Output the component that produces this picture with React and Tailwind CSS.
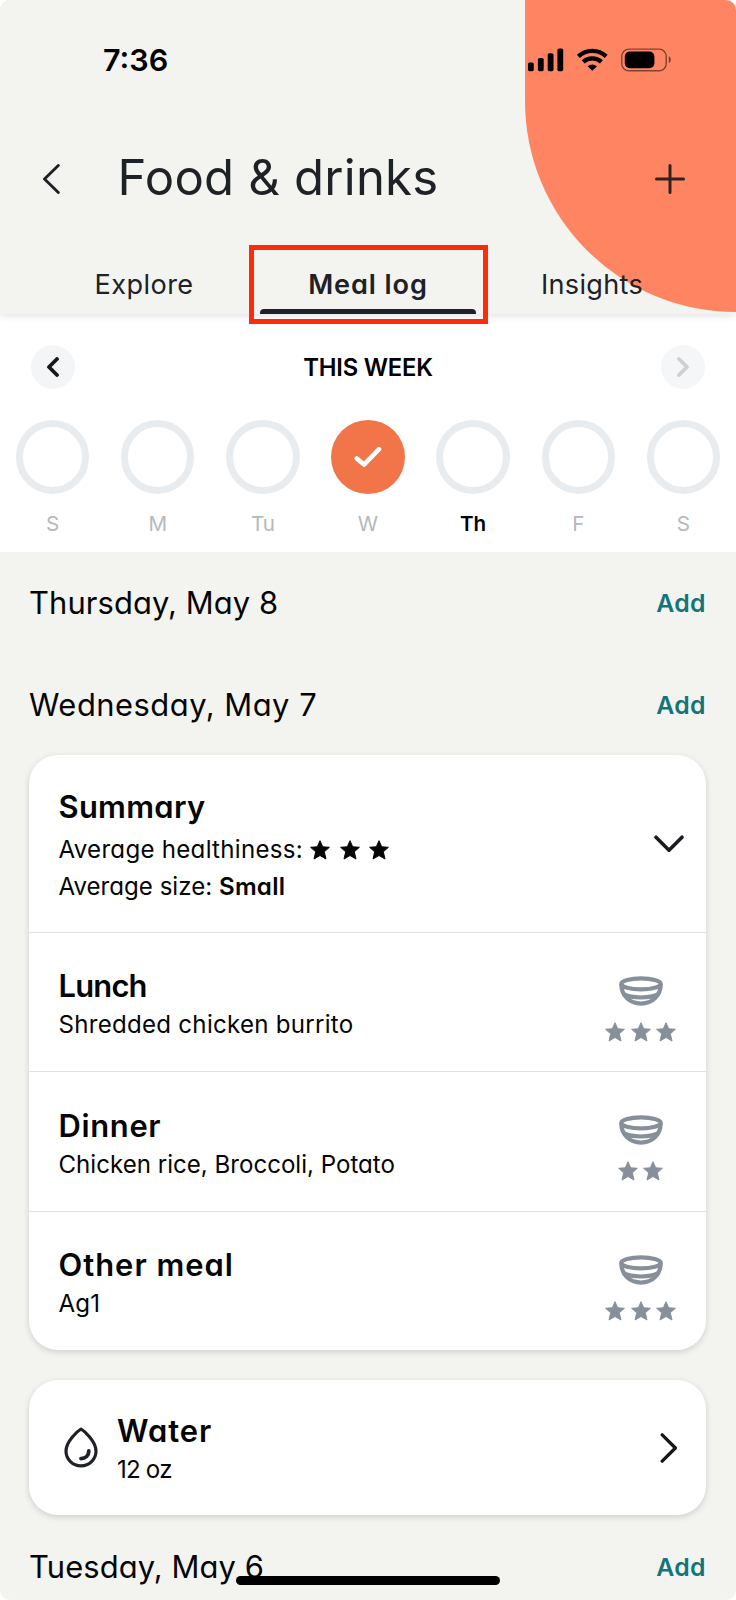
import React from "react";

const days = [
  { label: "S" },
  { label: "M" },
  { label: "Tu" },
  { label: "W", done: true },
  { label: "Th", today: true },
  { label: "F" },
  { label: "S" },
];

const meals = [
  { name: "Lunch", items: "Shredded chicken burrito", stars: 3, nameClass: "tracking-[-0.8px]", itemsClass: "tracking-[0.26px]" },
  { name: "Dinner", items: "Chicken rice, Broccoli, Potato", stars: 2, nameClass: "tracking-[0.68px]", itemsClass: "tracking-[0px]" },
  { name: "Other meal", items: "Ag1", stars: 3, nameClass: "tracking-[1px]", itemsClass: "tracking-[0.2px]" },
];

function Star({ className }) {
  return (
    <svg viewBox="0 0 20 20" className={className} fill="currentColor" stroke="currentColor" strokeWidth="1" strokeLinejoin="round">
      <path d="M10 0.7 12.7 6.8 19.4 7.3 14.3 11.8 16 19 10 15.5 4 19 5.7 11.8 0.6 7.3 7.3 6.8Z" />
    </svg>
  );
}

function Bowl() {
  return (
    <svg viewBox="0 0 44 30" className="h-[30px] w-[44px]" fill="none" stroke="currentColor" strokeWidth="4.2">
      <ellipse cx="22" cy="7.9" rx="19.7" ry="5.5" />
      <path d="M2.3 8C2.3 19.5 10.5 27.6 22 27.6S41.7 19.5 41.7 8" />
      <path d="M4.5 18.2C13 22.6 31 22.6 39.5 18.2" />
    </svg>
  );
}

function StatusIcons() {
  return (
    <svg viewBox="0 0 144 24" className="h-6 w-[144px]" fill="#000">
      <rect x="0" y="14.5" width="5.8" height="8.7" rx="1.6" />
      <rect x="9.9" y="10" width="5.8" height="13.2" rx="1.6" />
      <rect x="19.7" y="5.2" width="5.8" height="18" rx="1.6" />
      <rect x="29.4" y="0.6" width="5.8" height="22.6" rx="1.6" />
      <g fill="none" stroke="#000" strokeWidth="4.3">
        <path d="M50.4 8.4A20.3 20.3 0 0 1 78.2 8.4" />
        <path d="M55.2 13.9A13.3 13.3 0 0 1 73.4 13.9" />
      </g>
      <path d="M64.3 22.8 59.6 18.2A7 7 0 0 1 69 18.2Z" />
      <rect x="93.8" y="1.1" width="44.4" height="21.6" rx="7" fill="none" stroke="#000" strokeOpacity="0.5" strokeWidth="1.4" />
      <rect x="96.8" y="3.5" width="29.6" height="16.8" rx="5" />
      <path d="M140.8 8.2C143.4 9.2 143.4 14 140.8 15Z" fillOpacity="0.55" />
    </svg>
  );
}

function DateRow({ children, className }) {
  return (
    <div className="flex h-[101.5px] shrink-0 items-center justify-between pt-[2px] pr-[30px] pl-[29px]">
      <h2 className={"text-[30.9px] leading-10 whitespace-nowrap " + className}>{children}</h2>
      <button className="text-[24.8px] leading-8 font-semibold tracking-[0.4px] text-[#14747a]">Add</button>
    </div>
  );
}

export default function App() {
  return (
    <div className="relative flex h-[1600px] w-[736px] flex-col overflow-hidden rounded-[10px] bg-[#f3f4f0] font-['Inter',sans-serif] text-[#050505] [font-feature-settings:'cv11']">
      <header className="relative z-10 flex h-[314px] shrink-0 flex-col bg-[#f3f4f0] text-[#1e2126] shadow-[0_1px_8px_rgba(0,0,0,0.14)]">
        <div className="absolute top-0 right-0 h-[312px] w-[211.5px] rounded-bl-[212px] bg-[#ff8562]" />
        <div className="relative flex h-[119px] items-center justify-between pr-[64px] pl-[103px]">
          <span className="mt-[2px] text-[30.5px] leading-none font-semibold text-black">7:36</span>
          <StatusIcons />
        </div>
        <div className="relative flex h-[114px] items-center pr-[51px] pl-[42px]">
          <svg viewBox="0 0 18 30" className="mt-[6px] h-[30px] w-[18px]" fill="none" stroke="currentColor" strokeWidth="2.9" strokeLinecap="round" strokeLinejoin="round">
            <path d="M16.3 1.5 2.5 15 16.3 28.5" />
          </svg>
          <h1 className="mt-[4px] ml-[57.5px] flex-1 text-[49.1px] leading-none tracking-[0.2px] whitespace-nowrap">Food &amp; drinks</h1>
          <svg viewBox="0 0 30 30" className="mt-[6px] h-[30px] w-[30px] text-[#33211f]" fill="none" stroke="currentColor" strokeWidth="3" strokeLinecap="round">
            <path d="M15 1.5V28.5M1.5 15H28.5" />
          </svg>
        </div>
        <nav className="relative grid h-[81px] grid-cols-3 px-8 pt-[36px] text-[27.1px] leading-8 whitespace-nowrap">
          <span className="text-center tracking-[0.45px]">Explore</span>
          <span className="flex flex-col text-center font-semibold tracking-[0.9px]">
            Meal log
            <span className="mx-1 mt-auto h-[5px] rounded-t-[4px] bg-[#1e2126]" />
          </span>
          <span className="text-center tracking-[0.3px]">Insights</span>
        </nav>
        <div className="absolute top-[245px] left-[249px] h-[79px] w-[239px] border-[5.5px] border-[#fb2c08]" />
      </header>

      <section className="flex h-[237.5px] shrink-0 flex-col bg-white pt-[31px]">
        <div className="flex items-center justify-between px-[31px]">
          <button className="flex size-[44px] items-center justify-center rounded-full bg-[#f3f5f7] text-[#15181c]">
            <svg viewBox="0 0 14 20" className="h-5 w-[14px]" fill="none" stroke="currentColor" strokeWidth="3.8" strokeLinecap="round" strokeLinejoin="round">
              <path d="M11 2 3 10 11 18" />
            </svg>
          </button>
          <span className="mt-px text-[23.8px] leading-none font-semibold tracking-[-0.2px] text-black">THIS WEEK</span>
          <button className="flex size-[44px] items-center justify-center rounded-full bg-[#f5f6f8] text-[#ccd0d4]">
            <svg viewBox="0 0 14 20" className="h-5 w-[14px]" fill="none" stroke="currentColor" strokeWidth="3.8" strokeLinecap="round" strokeLinejoin="round">
              <path d="M3 2 11 10 3 18" />
            </svg>
          </button>
        </div>
        <div className="mt-[31px] grid grid-cols-7">
          {days.map((d, i) => (
            <div key={i} className="flex flex-col items-center">
              {d.done ? (
                <div className="flex size-[73.5px] items-center justify-center rounded-full bg-[#f27449]">
                  <svg viewBox="0 0 28 22" className="h-[22px] w-[28px]" fill="none" stroke="#fff" strokeWidth="4.6" strokeLinecap="round" strokeLinejoin="round">
                    <path d="M2.8 12.4 10 18.6 25 3.2" />
                  </svg>
                </div>
              ) : (
                <div className="size-[73.5px] rounded-full border-[7.5px] border-[#e9ecef]" />
              )}
              <span className={d.today ? "mt-[18px] text-[20.6px] leading-6 font-semibold text-black" : "mt-[18px] text-[20.6px] leading-6 text-[#b4b9be]"}>{d.label}</span>
            </div>
          ))}
        </div>
      </section>

      <DateRow className="tracking-[0.1px]">Thursday, May 8</DateRow>
      <DateRow className="tracking-[0.5px]">Wednesday, May 7</DateRow>

      <section className="mt-[0.5px] mr-[30px] ml-[29px] shrink-0 rounded-[29px] bg-white shadow-[0_2px_6px_rgba(0,0,0,0.15)]">
        <div className="flex h-[176.5px] justify-between pt-[31.5px] pr-[22px] pl-[29.5px]">
          <div>
            <h3 className="text-[30.9px] leading-10 font-semibold tracking-[0.3px]">Summary</h3>
            <div className="mt-[4.5px] flex items-center text-[24.1px] leading-[37px]">
              <span className="tracking-[0.27px]">Average healthiness:</span>
              <span className="ml-[7.5px] flex gap-[9.3px]">
                <Star className="size-5" />
                <Star className="size-5" />
                <Star className="size-5" />
              </span>
            </div>
            <p className="text-[24.1px] leading-[37px]">
              Average size: <b className="font-semibold tracking-[0.3px]">Small</b>
            </p>
          </div>
          <svg viewBox="0 0 30 18" className="mt-[48px] h-[18px] w-[30px]" fill="none" stroke="#1a1c20" strokeWidth="3.6" strokeLinecap="round" strokeLinejoin="round">
            <path d="M2 2.2 15 15.2 28 2.2" />
          </svg>
        </div>
        {meals.map((m) => (
          <div key={m.name} className="flex h-[139.5px] justify-between border-t border-[#dfe1e1] pr-[29px] pl-[29.5px]">
            <div className="pt-[33.5px]">
              <h3 className={"text-[30.9px] leading-10 font-semibold " + m.nameClass}>{m.name}</h3>
              <p className={"text-[24.1px] leading-[37px] " + m.itemsClass}>{m.items}</p>
            </div>
            <div className="flex w-[73px] flex-col items-center pt-[43px] text-[#87909a]">
              <Bowl />
              <div className="mt-[16px] flex gap-[5.7px]">
                {Array.from({ length: m.stars }, (_, i) => (
                  <Star key={i} className="size-5" />
                ))}
              </div>
            </div>
          </div>
        ))}
      </section>

      <section className="mt-[30px] mr-[30px] ml-[29px] flex h-[135px] shrink-0 items-center rounded-[29px] bg-white pr-[28px] pl-[34.5px] shadow-[0_2px_6px_rgba(0,0,0,0.15)]">
        <svg viewBox="0 0 34 41" className="h-[41px] w-[34px]" fill="none" stroke="#1e2126" strokeWidth="3.2" strokeLinecap="round" strokeLinejoin="round">
          <path d="M17 2C14 3.8 2 14 2 24.2A15 14.6 0 0 0 32 24.2C32 14 20 3.8 17 2Z" />
          <path d="M24.8 24C24.8 28.5 21.5 31.4 17 31.6" strokeWidth="3.8" />
        </svg>
        <div className="mt-[4px] ml-[19.5px] flex-1">
          <h3 className="text-[30.9px] leading-10 font-semibold tracking-[1px]">Water</h3>
          <p className="text-[24.1px] leading-[37px] tracking-[-0.8px]">12 oz</p>
        </div>
        <svg viewBox="0 0 18 30" className="h-[30px] w-[18px]" fill="none" stroke="#15171a" strokeWidth="3.3" strokeLinecap="round" strokeLinejoin="round">
          <path d="M2.2 1.8 15.4 15 2.2 28.2" />
        </svg>
      </section>

      <DateRow className="tracking-[0.1px]">Tuesday, May 6</DateRow>

      <div className="absolute top-[1576px] left-[236px] h-[9px] w-[264px] rounded-full bg-black" />
    </div>
  );
}
